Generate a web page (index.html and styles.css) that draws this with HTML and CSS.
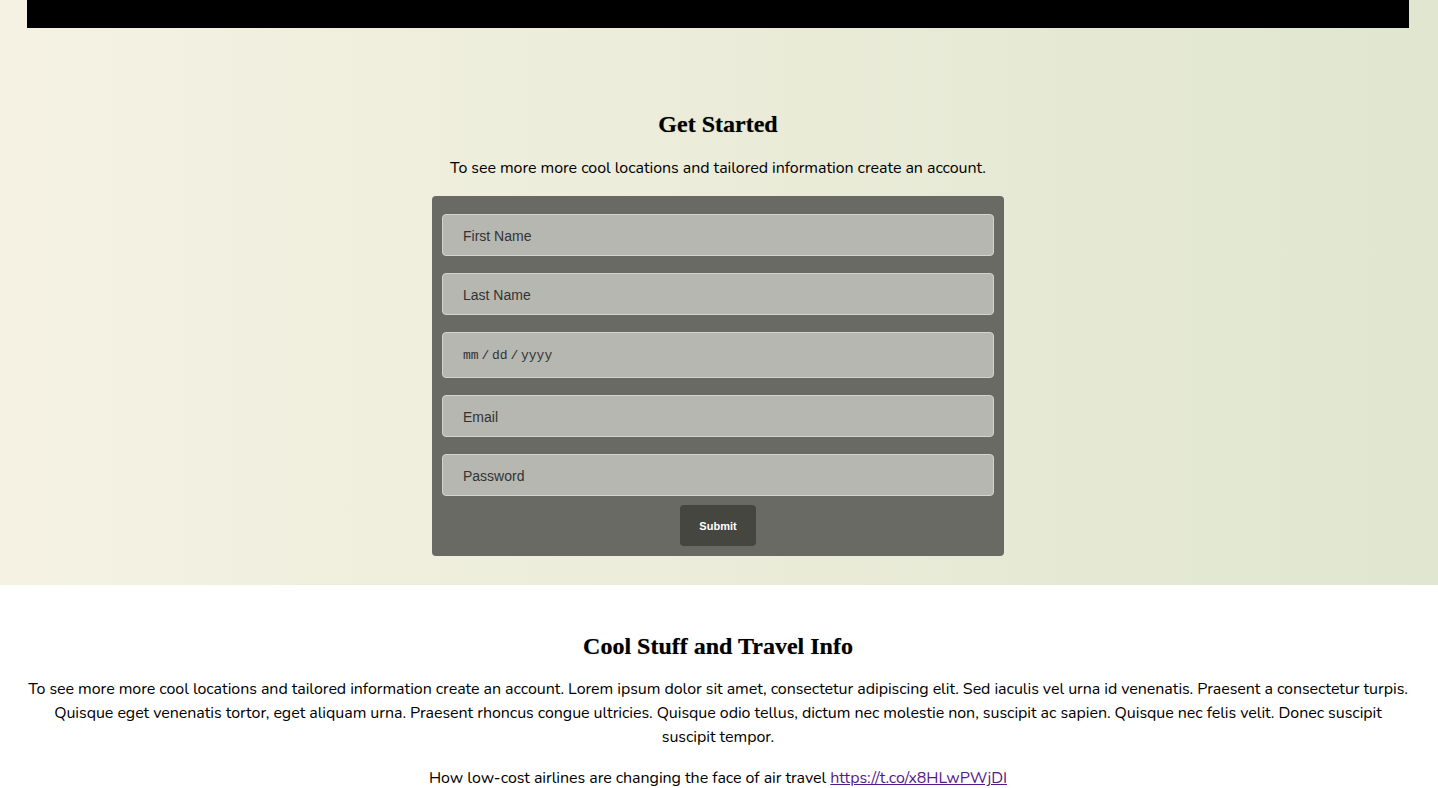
FILE: index.html
```html
<!DOCTYPE html>
<html>
<head>
<meta charset="utf-8">
<link rel="stylesheet" href="styles.css">
</head>
<body>
<section class="hero">
  <div class="topbar"></div>
  <div class="signup">
    <h2 class="title">Get Started</h2>
    <p class="lead">To see more more cool locations and tailored information create an account.</p>
    <form class="form">
      <input class="field" type="text" placeholder="First Name">
      <input class="field" type="text" placeholder="Last Name">
      <div class="field date"><span class="date-text">mm / dd / yyyy</span></div>
      <input class="field" type="text" placeholder="Email">
      <input class="field" type="password" placeholder="Password">
      <button class="submit" type="button">Submit</button>
    </form>
  </div>
</section>
<section class="info">
  <h2 class="title">Cool Stuff and Travel Info</h2>
  <p class="body-text">To see more more cool locations and tailored information create an account. Lorem ipsum dolor sit amet, consectetur adipiscing elit. Sed iaculis vel urna id venenatis. Praesent a consectetur turpis. Quisque eget venenatis tortor, eget aliquam urna. Praesent rhoncus congue ultricies. Quisque odio tellus, dictum nec molestie non, suscipit ac sapien. Quisque nec felis velit. Donec suscipit suscipit tempor.</p>
  <p class="body-text">How low-cost airlines are changing the face of air travel <a class="link" href="#">https://t.co/x8HLwPWjDI</a></p>
</section>
</body>
</html>
```
FILE: styles.css
```css
html, body {
  margin: 0;
  padding: 0;
}
body {
  font-family: "Nunito", "Lato", "Open Sans", sans-serif;
  font-size: 16px;
  letter-spacing: -0.055px;
  color: #000;
  background: #fff;
}
.hero {
  background: linear-gradient(to right, #f5f2e3 0%, #e0e6cf 100%);
  padding: 0 29px 29px 27px;
}
.topbar {
  height: 28px;
  background: #000;
}
.signup {
  display: flex;
  flex-direction: column;
  align-items: center;
  padding-top: 80px;
}
.title {
  font-family: "Liberation Serif", "Times New Roman", serif;
  font-weight: bold;
  font-size: 24px;
  letter-spacing: 0;
  margin: 0;
  line-height: 32px;
  text-align: center;
  text-shadow: 0 0 1px rgba(0,0,0,0.4);
}
.lead {
  margin: 16px 0 16px;
  line-height: 24px;
  text-align: center;
}
.form {
  width: 572px;
  box-sizing: border-box;
  background: #6a6a64;
  border-radius: 4px;
  padding: 18px 10px 10px;
  display: flex;
  flex-direction: column;
  align-items: center;
  gap: 17px;
}
.field {
  width: 100%;
  box-sizing: border-box;
  height: 42px;
  background: #b6b7b1;
  border: 1px solid #d3d4cf;
  border-radius: 4px;
  padding: 1px 20px 0;
  font-family: "Liberation Sans", Arial, sans-serif;
  font-size: 14px;
  letter-spacing: 0;
  color: #333;
  outline: none;
}
.field::placeholder {
  color: #333;
}
.date {
  height: 46px;
  display: flex;
  align-items: center;
}
.date-text {
  font-family: "Liberation Mono", "Courier New", monospace;
  font-size: 13px;
  color: #333;
  word-spacing: -5px;
}
.submit {
  margin-top: -8px;
  width: 76px;
  height: 41px;
  background: #464641;
  color: #fff;
  border: none;
  border-radius: 4px;
  font-family: "Liberation Sans", Arial, sans-serif;
  font-weight: bold;
  font-size: 11px;
  letter-spacing: 0;
}
.info {
  padding: 45px 29px 0 27px;
  text-align: center;
}
.body-text {
  margin: 15px 0 0;
  line-height: 24px;
}
.body-text + .body-text {
  margin-top: 17px;
}
.link {
  color: #551a8b;
}
```
